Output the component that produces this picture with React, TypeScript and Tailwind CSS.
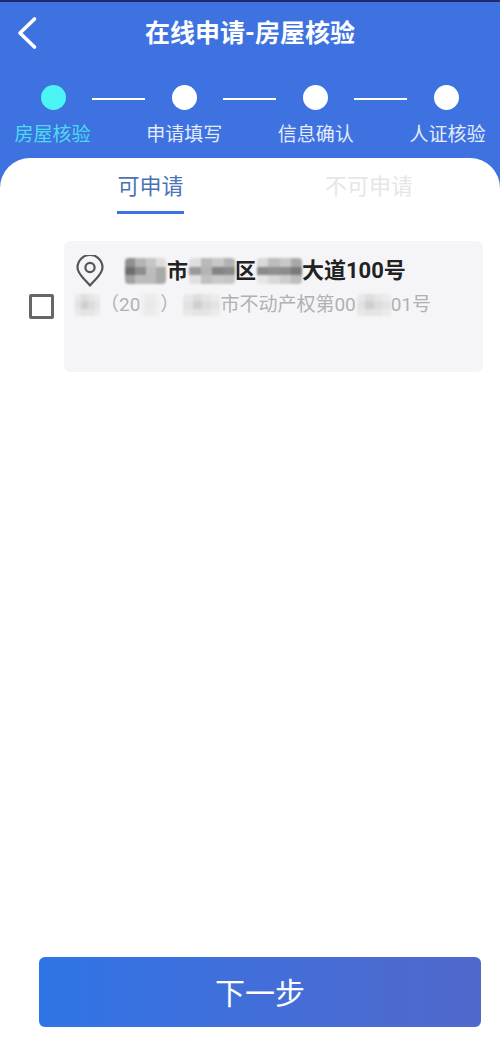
const FONT = "font-['Roboto','Noto_Sans_CJK_SC',sans-serif]";

const steps = [
  { label: "房屋核验", active: true },
  { label: "申请填写", active: false },
  { label: "信息确认", active: false },
  { label: "人证核验", active: false },
];

// blurred-out parts of the address, one class string per mosaic cell
function Mosaic({ cells, className }: { cells: string[]; className: string }) {
  return (
    <span className={`inline-grid grid-cols-4 grid-rows-3 shrink-0 overflow-hidden rounded-[4px] blur-[1px] ${className}`}>
      {cells.map((c, i) => (
        <span key={i} className={c} />
      ))}
    </span>
  );
}

const dark = [
  "bg-[#8f8f8f]", "bg-[#b5b5b5]", "bg-[#c6c6c6]", "bg-[#dcdcdc]",
  "bg-[#6e6e6e]", "bg-[#8d8d8d]", "bg-[#bdbdbd]", "bg-[#a9a9a9]",
  "bg-[#a2a2a2]", "bg-[#bcbcbc]", "bg-[#bbbbbb]", "bg-[#a9a9a9]",
];
const mid = [
  "bg-[#dedede]", "bg-[#b9b9b9]", "bg-[#c8c8c8]", "bg-[#b2b2b2]",
  "bg-[#9a9a9a]", "bg-[#b4b4b4]", "bg-[#848484]", "bg-[#8b8b8b]",
  "bg-[#e0e0e0]", "bg-[#c0c0c0]", "bg-[#c9c9c9]", "bg-[#c5c5c5]",
];
const mid2 = [
  "bg-[#d8d8d8]", "bg-[#bcbcbc]", "bg-[#c8c8c8]", "bg-[#a8a8a8]",
  "bg-[#8a8a8a]", "bg-[#8f8f8f]", "bg-[#8c8c8c]", "bg-[#7a7a7a]",
  "bg-[#e6e6e6]", "bg-[#d8d8d8]", "bg-[#cccccc]", "bg-[#bdbdbd]",
];
const light = [
  "bg-[#e8e8e9]", "bg-[#dededf]", "bg-[#e6e6e7]", "bg-[#ebebec]",
  "bg-[#e2e2e3]", "bg-[#cfcfd0]", "bg-[#dcdcdd]", "bg-[#e4e4e5]",
  "bg-[#e8e8e9]", "bg-[#e3e3e4]", "bg-[#e5e5e6]", "bg-[#ebebec]",
];
const pale = [
  "bg-[#f0f0f1]", "bg-[#ececed]", "bg-[#ebebec]", "bg-[#f0f0f1]",
  "bg-[#f0f0f1]", "bg-[#e9e9ea]", "bg-[#e8e8e9]", "bg-[#efeff0]",
  "bg-[#f0f0f1]", "bg-[#ebebec]", "bg-[#ebebec]", "bg-[#f0f0f1]",
];

export default function App() {
  return (
    <div className={`flex h-[1046px] w-[500px] flex-col overflow-hidden border-t-2 border-[#23286a] bg-[#3e72e0] ${FONT}`}>
      {/* Top bar */}
      <div className="relative flex h-[60px] shrink-0 items-center justify-center pt-[3px]">
        <svg
          className="absolute left-[16px] top-[14px]"
          width="22"
          height="34"
          viewBox="0 0 22 34"
          fill="none"
          stroke="#fff"
          strokeWidth="3.6"
          strokeLinecap="round"
          strokeLinejoin="round"
        >
          <path d="M18.5 3 L4 17 L18.5 31" />
        </svg>
        <h1 className="text-[25px] leading-[30px] font-bold text-white">在线申请-房屋核验</h1>
      </div>

      {/* Stepper */}
      <div className="mt-[23px] flex shrink-0 items-center pl-[40.5px]">
        {steps.map((s, i) => (
          <div key={s.label} className="flex items-center">
            {i > 0 && <div className="mx-[26.5px] mt-[3px] h-[2px] w-[53px] bg-white" />}
            <div className={`size-[25px] rounded-full ${s.active ? "bg-[#4cf5f5]" : "bg-white"}`} />
          </div>
        ))}
      </div>
      <div className="mt-[13px] flex h-[24px] shrink-0 justify-between pl-[14px] pr-[14px]">
        {steps.map((s) => (
          <span
            key={s.label}
            className={`w-[77px] whitespace-nowrap text-center text-[19px] leading-[24px] ${s.active ? "text-[#4cdcf0]" : "text-[#e4ecfb]"}`}
          >
            {s.label}
          </span>
        ))}
      </div>

      {/* White sheet */}
      <div className="mt-[11px] flex min-h-0 flex-1 flex-col rounded-t-[30px] bg-white">
        <div className="flex h-[56px] shrink-0 pt-[15px]">
          <div className="ml-[117px] flex h-[41px] w-[67px] flex-col items-center border-b-[3px] border-[#3e72e0]">
            <span className="whitespace-nowrap text-[22px] leading-[28px] text-[#4a72b5]">可申请</span>
          </div>
          <span className="ml-[141px] whitespace-nowrap text-[22px] leading-[28px] text-[#e6e6e6]">不可申请</span>
        </div>

        {/* House row */}
        <div className="mt-[27px] flex shrink-0 items-center pl-[29px] pr-[17px]">
          <div className="size-[25px] shrink-0 rounded-[2px] border-[3px] border-[#666]" />
          <div className="ml-[10px] flex h-[131px] flex-1 flex-col rounded-[6px] bg-[#f5f5f8] pl-[12px] pt-[14px]">
            <div className="flex h-[32px] items-center">
              <svg width="28" height="32" viewBox="0 0 28 32" fill="none" stroke="#555" strokeWidth="2.2">
                <path d="M14 30.5 C 9 24 1.5 19.5 1.5 12.5 A 12.5 12.5 0 0 1 26.5 12.5 C 26.5 19.5 19 24 14 30.5 Z" strokeLinejoin="round" />
                <circle cx="14" cy="12.5" r="4.6" />
              </svg>
              <span className="ml-[21px] flex items-center whitespace-nowrap text-[21px] leading-[28px] font-bold text-[#222]">
                <Mosaic cells={dark} className="h-[26px] w-[41px]" />
                <span className="ml-[1px]">市</span>
                <Mosaic cells={mid} className="ml-[1px] h-[26px] w-[46px]" />
                <span>区</span>
                <Mosaic cells={mid2} className="ml-[1px] h-[26px] w-[45px]" />
                <span className="text-[22px]">大道100号</span>
              </span>
            </div>
            <div className="mt-[5px] flex h-[26px] items-center whitespace-nowrap text-[19px] leading-[26px] text-[#b0b0b2]">
              <Mosaic cells={light} className="-ml-[1px] h-[23px] w-[25px]" />
              <span>（20</span>
              <Mosaic cells={pale} className="h-[23px] w-[20px]" />
              <span>）</span>
              <Mosaic cells={light} className="ml-[4px] h-[23px] w-[37px]" />
              <span>市不动产权第00</span>
              <Mosaic cells={light} className="ml-[1px] h-[23px] w-[34px]" />
              <span>01号</span>
            </div>
          </div>
        </div>

        {/* Next button */}
        <button className="mb-[19px] ml-[39px] mt-auto flex h-[70px] w-[442px] shrink-0 items-center justify-center rounded-[6px] bg-gradient-to-r from-[#2e74e6] to-[#5068cc] pt-[3px] text-[30px] leading-[36px] text-white">
          下一步
        </button>
      </div>
    </div>
  );
}
